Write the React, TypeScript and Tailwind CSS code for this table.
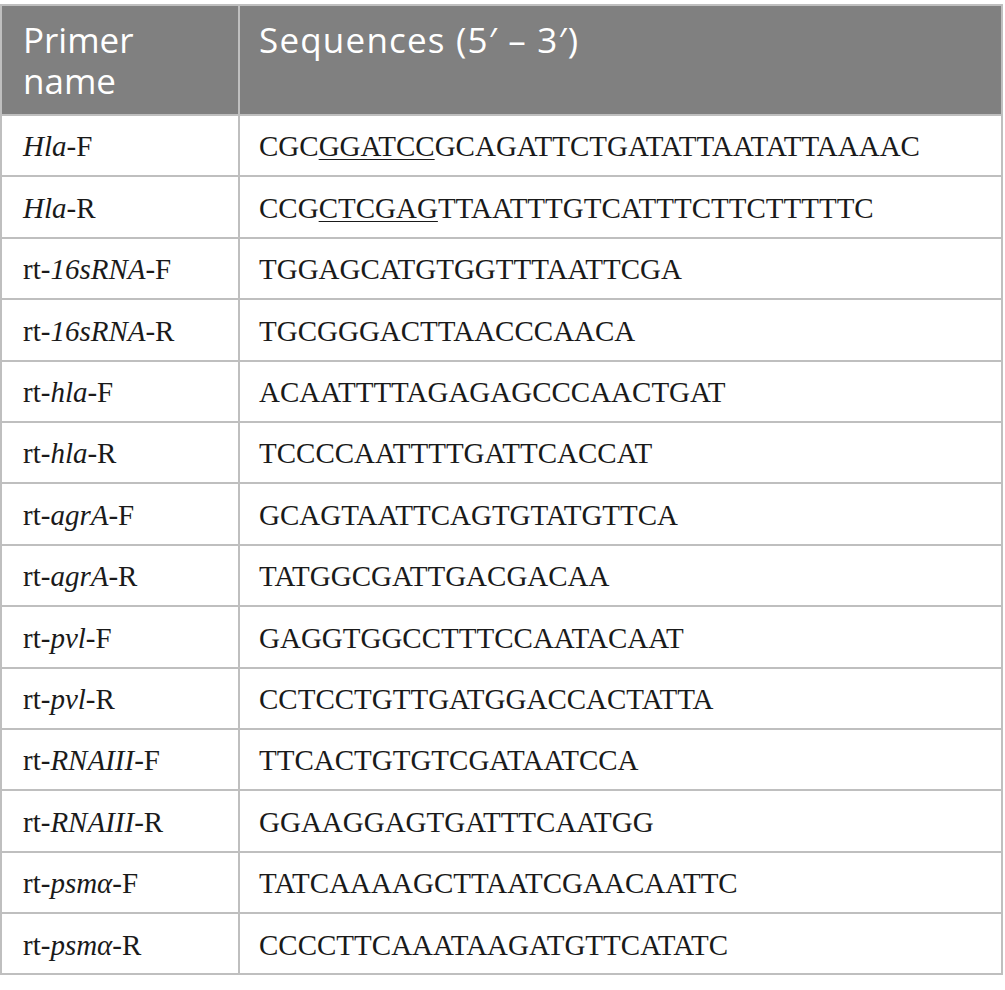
import React from "react";

type Row = { pre: string; gene: string; post: string; seq: React.ReactNode };

const rows: Row[] = [
  { pre: "", gene: "Hla", post: "-F", seq: <>CGC<span className="underline underline-offset-[3px] decoration-1">GGATCC</span>GCAGATTCTGATATTAATATTAAAAC</> },
  { pre: "", gene: "Hla", post: "-R", seq: <>CCG<span className="underline underline-offset-[3px] decoration-1">CTCGAG</span>TTAATTTGTCATTTCTTCTTTTTC</> },
  { pre: "rt-", gene: "16sRNA", post: "-F", seq: "TGGAGCATGTGGTTTAATTCGA" },
  { pre: "rt-", gene: "16sRNA", post: "-R", seq: "TGCGGGACTTAACCCAACA" },
  { pre: "rt-", gene: "hla", post: "-F", seq: "ACAATTTTAGAGAGCCCAACTGAT" },
  { pre: "rt-", gene: "hla", post: "-R", seq: "TCCCCAATTTTGATTCACCAT" },
  { pre: "rt-", gene: "agrA", post: "-F", seq: "GCAGTAATTCAGTGTATGTTCA" },
  { pre: "rt-", gene: "agrA", post: "-R", seq: "TATGGCGATTGACGACAA" },
  { pre: "rt-", gene: "pvl", post: "-F", seq: "GAGGTGGCCTTTCCAATACAAT" },
  { pre: "rt-", gene: "pvl", post: "-R", seq: "CCTCCTGTTGATGGACCACTATTA" },
  { pre: "rt-", gene: "RNAIII", post: "-F", seq: "TTCACTGTGTCGATAATCCA" },
  { pre: "rt-", gene: "RNAIII", post: "-R", seq: "GGAAGGAGTGATTTCAATGG" },
  { pre: "rt-", gene: "psmα", post: "-F", seq: "TATCAAAAGCTTAATCGAACAATTC" },
  { pre: "rt-", gene: "psmα", post: "-R", seq: "CCCCTTCAAATAAGATGTTCATATC" },
];

export default function App() {
  return (
    <div className="w-[1005px] h-[990px] bg-white pt-[4px]">
      <table className="w-[1003px] border-collapse">
        <thead>
          <tr className="bg-[#808080] text-white font-['Open_Sans',sans-serif] text-[35px] leading-[41px]">
            <th className="w-[238px] h-[110px] border-2 border-[#bfbfbf] align-top text-left font-normal pl-[21px] pt-[13px]">
              Primer
              <br />
              name
            </th>
            <th className="h-[110px] border-2 border-[#bfbfbf] align-top text-left font-normal pl-[19px] pt-[13px] tracking-[1.2px]">
              Sequences (5′ – 3′)
            </th>
          </tr>
        </thead>
        <tbody className="font-['Liberation_Serif',serif] text-[29px] text-[#1a1a1a]">
          {rows.map((r, i) => (
            <tr key={i} className="h-[61.4px]">
              <td className="border-2 border-[#bfbfbf] pl-[21px] pt-[3px]">
                {r.pre}
                <i>{r.gene}</i>
                {r.post}
              </td>
              <td className="border-2 border-[#bfbfbf] pl-[19px] pt-[3px]">{r.seq}</td>
            </tr>
          ))}
        </tbody>
      </table>
    </div>
  );
}
